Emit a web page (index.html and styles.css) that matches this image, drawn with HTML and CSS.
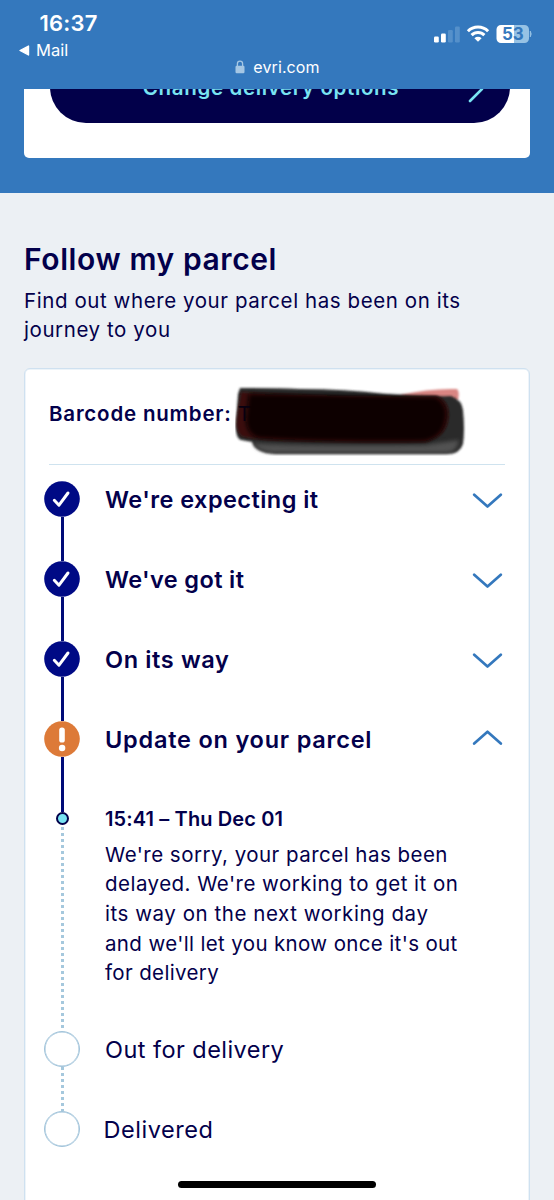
FILE: index.html
```
<!DOCTYPE html>
<html lang="en">
<head>
<meta charset="utf-8">
<title>Follow my parcel</title>
<link rel="stylesheet" href="styles.css">
</head>
<body>
<div class="screen">
  <header class="browser-bar">
    <div class="status">
      <div class="status-left">
        <div class="clock"><span>16:37</span></div>
        <div class="back"><svg width="11" height="11" viewBox="0 0 11 11"><path d="M1 5.5 9.5 1v9z" fill="#fff" stroke="#fff" stroke-width="1.4" stroke-linejoin="round"/></svg><span>Mail</span></div>
      </div>
      <div class="status-right">
        <svg width="100" height="22" viewBox="0 0 100 22">
          <rect x="1" y="13.500" width="4.800" height="6" rx="1.200" fill="#fff"/>
          <rect x="8" y="10.500" width="4.800" height="9" rx="1.200" fill="#fff"/>
          <rect x="15" y="7" width="4.800" height="12.500" rx="1.200" fill="#5590ca"/>
          <rect x="22" y="3.500" width="4.800" height="16" rx="1.200" fill="#5590ca"/>
          <g fill="none" stroke="#fff" stroke-width="3">
            <path d="M34.900 8.300a14.200 14.200 0 0 1 20.200 0"/>
            <path d="M38.600 12.100a9 9 0 0 1 12.800 0"/>
          </g>
          <path d="M41.400 15.200a5.200 5.200 0 0 1 7.200 0L45 18.800z" fill="#fff"/>
          <path d="M68 2h13v18H68a4.500 4.500 0 0 1-4.500-4.500v-9A4.500 4.500 0 0 1 68 2z" fill="#fff"/>
          <path d="M81 2h10.500A4.500 4.500 0 0 1 96 6.500v9a4.500 4.500 0 0 1-4.500 4.500H81z" fill="#97c2e4"/>
          <path d="M97.300 8.200q1.700 2.800 0 5.600z" fill="#97c2e4" stroke="#97c2e4"/>
          <text x="69" y="16.900" class="battery">53</text>
        </svg>
      </div>
    </div>
    <div class="address">
      <svg width="10" height="14" viewBox="0 0 10 14"><path d="M2.400 6V3.800a2.600 2.600 0 0 1 5.200 0V6" fill="none" stroke="#a5c7e4" stroke-width="1.300"/><rect x=".5" y="5.800" width="9" height="7.500" rx="1.200" fill="#a5c7e4"/></svg>
      <span>evri.com</span>
    </div>
  </header>
  <section class="hero">
    <div class="hero-card">
      <div class="cta"><span>Change delivery options</span>
        <svg class="cta-arrow" width="16" height="28" viewBox="0 0 16 28"><path d="M2 2 14 14 2 26" fill="none" stroke="#79e3f2" stroke-width="2.600" stroke-linecap="round" stroke-linejoin="round"/></svg>
      </div>
    </div>
  </section>
  <main class="content">
    <h1>Follow my parcel</h1>
    <p class="intro">Find out where your parcel has been on its<br>journey to you</p>
    <div class="card">
      <div class="barcode"><b>Barcode number:</b>
        <svg class="redaction" width="250" height="90" viewBox="0 0 250 90">
          <defs><filter id="soft" x="-10%" y="-20%" width="120%" height="140%"><feGaussianBlur stdDeviation="1.300"/></filter>
          <filter id="softer" x="-10%" y="-20%" width="120%" height="140%"><feGaussianBlur stdDeviation="2"/></filter></defs>
          <path d="M165 15Q196 8 222 9Q225 12 223 20L190 26z" fill="#d98582" filter="url(#soft)"/>
          <path d="M5 8Q40 8 65 9Q110 9 150 14Q190 17 216 16Q227 20 228 30Q230 50 228 64Q225 74 212 74H40Q20 73 17 62L6 60Q0 58 1 44L3 14z" fill="#2c2c2c" filter="url(#soft)"/>
          <path d="M18 63Q40 66 190 65L224 60Q222 73 210 73H42Q22 72 18 63z" fill="#606060" opacity=".75" filter="url(#softer)"/>
          <path d="M6 12Q50 14 110 16Q170 17 202 16Q216 22 213 40Q211 56 191 62Q130 63 60 61Q18 60 6 56Q0 50 2 36z" fill="#3a100c" filter="url(#soft)"/>
          <path d="M14 14Q80 15 201 17Q215 26 210 42Q207 57 190 61Q90 62 24 58Q12 55 11 40z" fill="#090000" filter="url(#softer)"/>
        </svg>
        <i>T</i>
      </div>
      <div class="steps">
        <div class="step"><div class="rail"><svg width="36" height="36" viewBox="0 0 36 36"><circle cx="18" cy="18" r="17.800" fill="#000a85"/><path d="M10.300 19.300 15 24.200 24 12" fill="none" stroke="#fff" stroke-width="3" stroke-linecap="round" stroke-linejoin="round"/></svg><div class="line"></div></div><div class="label expecting">We're expecting it</div><svg class="chev" width="32" height="18" viewBox="0 0 32 18"><path d="M2.200 4.700 15.500 16.500 28.800 4.700"/></svg></div>
        <div class="step"><div class="rail"><svg width="36" height="36" viewBox="0 0 36 36"><circle cx="18" cy="18" r="17.800" fill="#000a85"/><path d="M10.300 19.300 15 24.200 24 12" fill="none" stroke="#fff" stroke-width="3" stroke-linecap="round" stroke-linejoin="round"/></svg><div class="line"></div></div><div class="label received">We've got it</div><svg class="chev" width="32" height="18" viewBox="0 0 32 18"><path d="M2.200 4.700 15.500 16.500 28.800 4.700"/></svg></div>
        <div class="step"><div class="rail"><svg width="36" height="36" viewBox="0 0 36 36"><circle cx="18" cy="18" r="17.800" fill="#000a85"/><path d="M10.300 19.300 15 24.200 24 12" fill="none" stroke="#fff" stroke-width="3" stroke-linecap="round" stroke-linejoin="round"/></svg><div class="line"></div></div><div class="label transit">On its way</div><svg class="chev" width="32" height="18" viewBox="0 0 32 18"><path d="M2.200 4.700 15.500 16.500 28.800 4.700"/></svg></div>
        <div class="step"><div class="rail"><svg width="36" height="36" viewBox="0 0 36 36"><circle cx="18" cy="18" r="17.800" fill="#dd7a38"/><rect x="15.200" y="6.500" width="5.600" height="15" rx="2.600" fill="#fff"/><circle cx="18.100" cy="27" r="3.200" fill="#fff"/></svg><div class="line"></div></div><div class="label update">Update on your parcel</div><svg class="chev" width="32" height="18" viewBox="0 0 32 18"><path d="M2.200 13.500 15.500 1.700 28.800 13.500"/></svg></div>
        <div class="step event"><div class="rail"><div class="line stub"></div><div class="dot"></div><div class="dots"></div></div>
          <div class="detail"><div class="when">15:41 – Thu Dec 01</div>
          <p>We're sorry, your parcel has been<br>delayed. We're working to get it on<br><span class="looser">its way on the next working day</span><br><span class="tighter">and we'll let you know once it's out</span><br><span class="tighter">for delivery</span></p></div></div>
        <div class="step"><div class="rail"><div class="empty"></div><div class="dots last"></div></div><div class="label pending">Out for delivery</div></div>
        <div class="step"><div class="rail"><div class="empty"></div></div><div class="label pending delivered">Delivered</div></div>
      </div>
    </div>
  </main>
  <div class="home"></div>
</div>
</body>
</html>
```
FILE: styles.css
```
*{box-sizing:border-box}
body{margin:0;font-family:Inter,"Liberation Sans",sans-serif;color:#03004b;background:#ecf0f4}
.screen{position:relative;width:554px;height:1200px;overflow:hidden}
svg{display:block;flex:none}
span{white-space:nowrap}
.browser-bar{height:89px;background:#3478bd;color:#fff;padding-top:9px}
.status{display:flex;justify-content:space-between;height:50px;padding:0 21px 0 19px}
.clock{font-size:22px;line-height:28px;font-weight:600;padding-left:20.500px;letter-spacing:.2px}
.back{display:flex;align-items:center;gap:6px;font-size:16.500px;line-height:24px;margin-top:1px}
.status-right{padding-top:14px}
.battery{font:700 17px Inter,sans-serif;fill:#3478bd}
.address{display:flex;align-items:center;justify-content:center;gap:8px;height:16px;padding-left:1px;font-size:16px;line-height:16px;letter-spacing:.1px}
.hero{height:104px;background:#3478bd;padding:0 24px}
.hero-card{height:69px;background:#fff;border-radius:0 0 5px 5px;padding:0 20px 0 26px;overflow:hidden}
.cta{position:relative;width:460px;height:72px;margin-top:-38.500px;border-radius:36px;background:#02004a;color:#79e3f2;font-size:20.500px;font-weight:600;line-height:74px;text-align:center;padding-right:18px;letter-spacing:.65px}
.cta-arrow{position:absolute;right:26px;top:24px}
.content{padding:46px 24px 0}
h1{margin:0;font-size:30px;line-height:40px;font-weight:600;letter-spacing:.6px}
.intro{margin:6.900px 0 23.100px;font-size:20.500px;line-height:29.600px;letter-spacing:.58px}
.card{height:900px;border:1px solid #cfe1f0;border-radius:6px;background:#fff;padding:.5px 24px 0 19px;box-shadow:inset 0 0 0 .5px #dce9f4}
.barcode{position:relative;display:flex;gap:6px;margin-left:5px;height:95.500px;padding-top:30.500px;border-bottom:1.500px solid #cfe3ef;font-size:20.500px;line-height:28px}
.barcode b{font-weight:600;letter-spacing:.8px}
.barcode i{position:relative;font-style:normal;color:#070010}
.redaction{position:absolute;left:186px;top:10px}
.steps{padding-top:16px}
.step{display:flex;height:80px}
.rail{width:36px;display:flex;flex-direction:column;align-items:center;margin-right:25px}
.line{width:3px;flex:1;background:#000a78}
.label{flex:1;font-size:23.500px;line-height:38px;font-weight:600}
.expecting{letter-spacing:.45px}
.received{letter-spacing:.38px}
.transit{letter-spacing:.65px}
.update{letter-spacing:.78px}
.pending{font-weight:400;letter-spacing:.45px}
.delivered{margin-left:-1.500px;letter-spacing:.55px}
.chev{margin:9px 1px 0 0;fill:none;stroke:#3478bd;stroke-width:2.700;stroke-linecap:round;stroke-linejoin:round}
.event{height:230px}
.stub{flex:0 0 11px}
.dot{width:13px;height:13px;border:2.500px solid #02004a;border-radius:50%;background:#79e3f2}
.dots{flex:1;width:3px;margin-top:2px;background:repeating-linear-gradient(#a5c8dd 0 3px,transparent 3px 6px)}
.last{margin-top:0}
.empty{width:36px;height:36px;border:1.500px solid #a0c3da;border-radius:50%;box-shadow:inset 0 0 0 .5px #a0c3da}
.detail{padding-top:3.800px}
.when{font-size:20px;line-height:28px;font-weight:600;letter-spacing:.12px}
.detail p{margin:6.900px 0 0;font-size:20.500px;line-height:29.600px;letter-spacing:.47px}
.looser{letter-spacing:.55px}
.tighter{letter-spacing:.36px}
.home{position:absolute;left:178px;top:1181px;width:198px;height:7px;border-radius:4px;background:#000}
```
